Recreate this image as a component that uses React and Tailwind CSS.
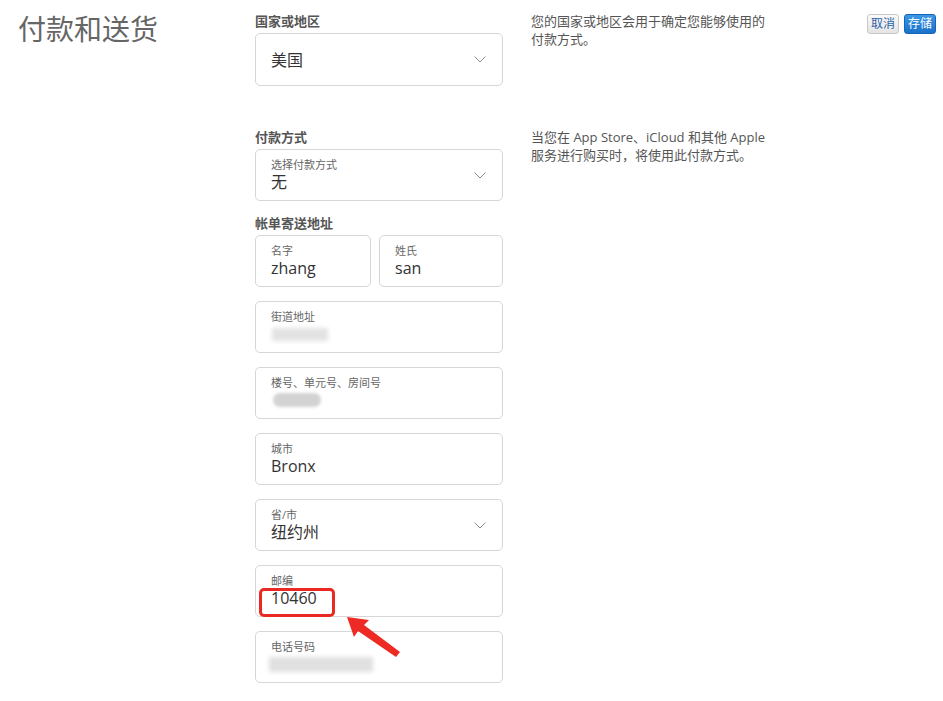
import React from 'react';

const font = { fontFamily: '"Open Sans", "Noto Sans CJK SC", sans-serif' };

const Chevron = () => (
  <svg width="12" height="7" viewBox="0 0 12 7" className="shrink-0 mr-[1px]">
    <path d="M0.5 0.5l5.5 5.5 5.5-5.5" fill="none" stroke="#8e8e8e" strokeWidth="1" />
  </svg>
);

const Box = ({ label, value, select, blur, className = '', children }) => (
  <div
    className={`relative h-[52px] rounded-[5px] border border-[#d6d6d6] bg-white pl-[15px] pr-[15px] flex items-center ${className}`}
  >
    <div className="flex-1 min-w-0">
      {label && <div className="text-[11px] leading-[14px] text-[#666]">{label}</div>}
      {value && <div className="text-[16px] leading-[20px] text-[#333]">{value}</div>}
      {blur && <div className="h-[20px] flex items-center">{blur}</div>}
    </div>
    {select && <Chevron />}
    {children}
  </div>
);

const SectionLabel = ({ children }) => (
  <div className="text-[13px] leading-[18px] font-bold text-[#555] mb-[3px]">{children}</div>
);

const Desc = ({ children }) => (
  <p className="ml-[28px] w-[245px] text-[13px] leading-[18px] text-[#555]">{children}</p>
);

export default function App() {
  return (
    <div className="min-h-[701px] bg-white flex pt-[12px]" style={font}>
      {/* page title */}
      <div className="w-[255px] pl-[18px]">
        <h1 className="text-[28px] leading-[34px] text-[#666]">付款和送货</h1>
      </div>

      <div className="flex flex-col">
        {/* country */}
        <div className="flex">
          <div className="w-[248px]">
            <SectionLabel>国家或地区</SectionLabel>
            <Box value="美国" select className="h-[53px] mt-[2px]" />
          </div>
          <Desc>
            您的国家或地区会用于确定您能够使用的
            <br />
            付款方式。
          </Desc>
        </div>

        {/* payment */}
        <div className="flex mt-[42px]">
          <div className="w-[248px]">
            <SectionLabel>付款方式</SectionLabel>
            <Box label="选择付款方式" value="无" select />
            <div className="mt-[13px]">
              <SectionLabel>帐单寄送地址</SectionLabel>
            </div>
            <div className="flex gap-[8px]">
              <Box label="名字" value="zhang" className="w-[116px]" />
              <Box label="姓氏" value="san" className="flex-1" />
            </div>
            <div className="flex flex-col gap-[14px] mt-[14px]">
              <Box
                label="街道地址"
                blur={<div className="ml-[1px] h-[13px] w-[56px] bg-[#e2e2e2] blur-[2px]" />}
              />
              <Box
                label="楼号、单元号、房间号"
                blur={<div className="ml-[2px] h-[14px] w-[48px] rounded-full bg-[#d3d3d3] blur-[1.5px]" />}
              />
              <Box label="城市" value="Bronx" />
              <Box label="省/市" value="纽约州" select />
              <Box label="邮编" value="10460">
                <div className="absolute left-[3px] top-[22px] w-[76px] h-[29px] rounded-[5px] border-[3px] border-[#ea2a22]" />
              </Box>
              <Box
                label="电话号码"
                blur={<div className="-ml-[2px] h-[15px] w-[104px] bg-[#e0e0e0] blur-[2px]" />}
              />
            </div>
          </div>
          <Desc>
            当您在 App Store、iCloud 和其他 Apple
            <br />
            服务进行购买时，将使用此付款方式。
          </Desc>
        </div>
      </div>

      {/* actions */}
      <div className="ml-auto pr-[7px] pt-[2px] flex gap-[5px] items-start">
        <button className="h-[20px] px-[3px] rounded-[3px] border border-[#c8c8c8] bg-gradient-to-b from-[#fafafa] to-[#e4e4e4] text-[12px] leading-[18px] text-[#2d63a6]">
          取消
        </button>
        <button className="h-[20px] px-[3px] rounded-[3px] border border-[#1566b8] bg-gradient-to-b from-[#3b97e6] to-[#1a71c9] text-[12px] leading-[18px] text-white">
          存储
        </button>
      </div>

      {/* annotation arrow */}
      <svg className="absolute left-0 top-0 pointer-events-none" width="943" height="701">
        <polygon
          points="347,617 369,620 364,625 400,652 396,657 358,631 354,637"
          fill="#ee2a24"
        />
      </svg>
    </div>
  );
}
